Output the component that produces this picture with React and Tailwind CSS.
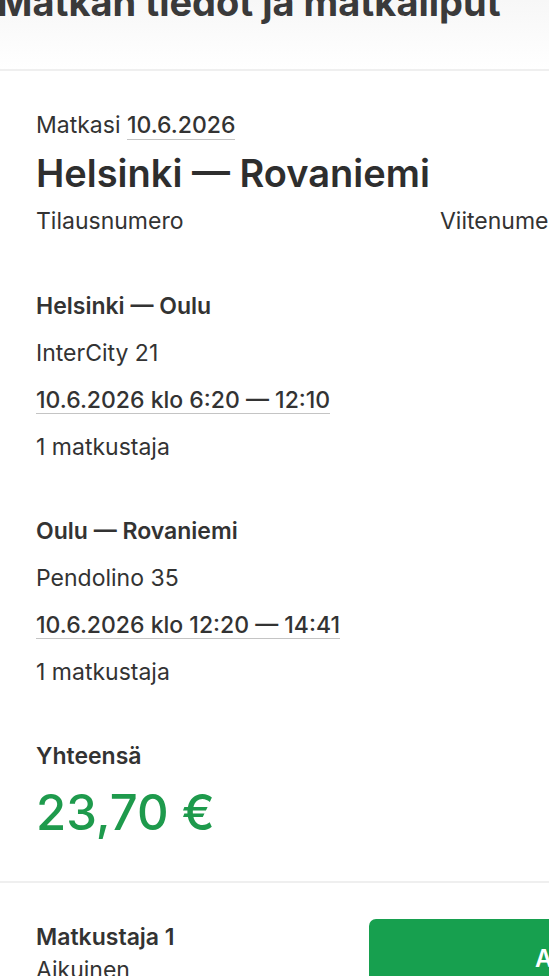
import React from "react";

const segments = [
  {
    route: "Helsinki — Oulu",
    train: "InterCity 21",
    time: "10.6.2026 klo 6:20 — 12:10",
    pax: "1 matkustaja",
  },
  {
    route: "Oulu — Rovaniemi",
    train: "Pendolino 35",
    time: "10.6.2026 klo 12:20 — 14:41",
    pax: "1 matkustaja",
  },
];

function Segment({ s }) {
  return (
    <div className="flex flex-col text-[23px] leading-[47px] text-[#333]">
      <div className="font-semibold">{s.route}</div>
      <div>{s.train}</div>
      <div>
        <span className="font-medium border-b border-[#c4c4c4] leading-[26px] inline-block">
          {s.time}
        </span>
      </div>
      <div>{s.pax}</div>
    </div>
  );
}

export default function App() {
  return (
    <div
      className="w-[549px] h-[976px] overflow-hidden bg-white text-[#333]"
      style={{ fontFamily: "Inter, 'Noto Sans', sans-serif" }}
    >
      {/* page title, scrolled partly out of view */}
      <div className="h-[69px] flex flex-col bg-gradient-to-b from-[#f7f7f7] to-white">
        <h1 className="-mt-[20px] -ml-[3px] text-[38px] leading-[44px] font-bold text-[#3a3a3a] whitespace-nowrap">
          Matkan tiedot ja matkaliput
        </h1>
      </div>
      <div className="h-[2px] bg-[#efefef]" />

      <div className="px-9 pt-[40px]">
        <div className="text-[23px] leading-[28px]">
          Matkasi{" "}
          <span className="font-medium border-b border-[#c4c4c4]">10.6.2026</span>
        </div>
        <h2 className="mt-[12px] text-[38px] leading-[44px] font-semibold text-[#2e2e2e] whitespace-nowrap">
          Helsinki — Rovaniemi
        </h2>
        <div className="mt-[12px] flex text-[23px] leading-[28px] whitespace-nowrap">
          <div className="w-[404px] shrink-0">Tilausnumero</div>
          <div>Viitenumero</div>
        </div>

        <div className="mt-[48px] flex flex-col gap-[37px]">
          {segments.map((s) => (
            <Segment key={s.route} s={s} />
          ))}
        </div>

        <div className="mt-[37px] text-[23px] leading-[47px] font-semibold">Yhteensä</div>
        <div className="mt-[5px] text-[49px] leading-[56px] font-medium text-[#1e9a4c]">
          23,70 €
        </div>
      </div>

      <div className="mt-[40px] h-[2px] bg-[#efefef]" />

      <div className="pl-9 pt-[36px] flex">
        <div className="w-[333px] shrink-0 text-[23px]">
          <div className="font-semibold leading-[36px]">Matkustaja 1</div>
          <div className="leading-[30px]">Aikuinen</div>
        </div>
        <button className="w-[240px] h-[80px] shrink-0 rounded-[7px] bg-[#17a04f] text-white text-[24px] font-semibold text-left pl-[166px]">
          Avaa
        </button>
      </div>
    </div>
  );
}
